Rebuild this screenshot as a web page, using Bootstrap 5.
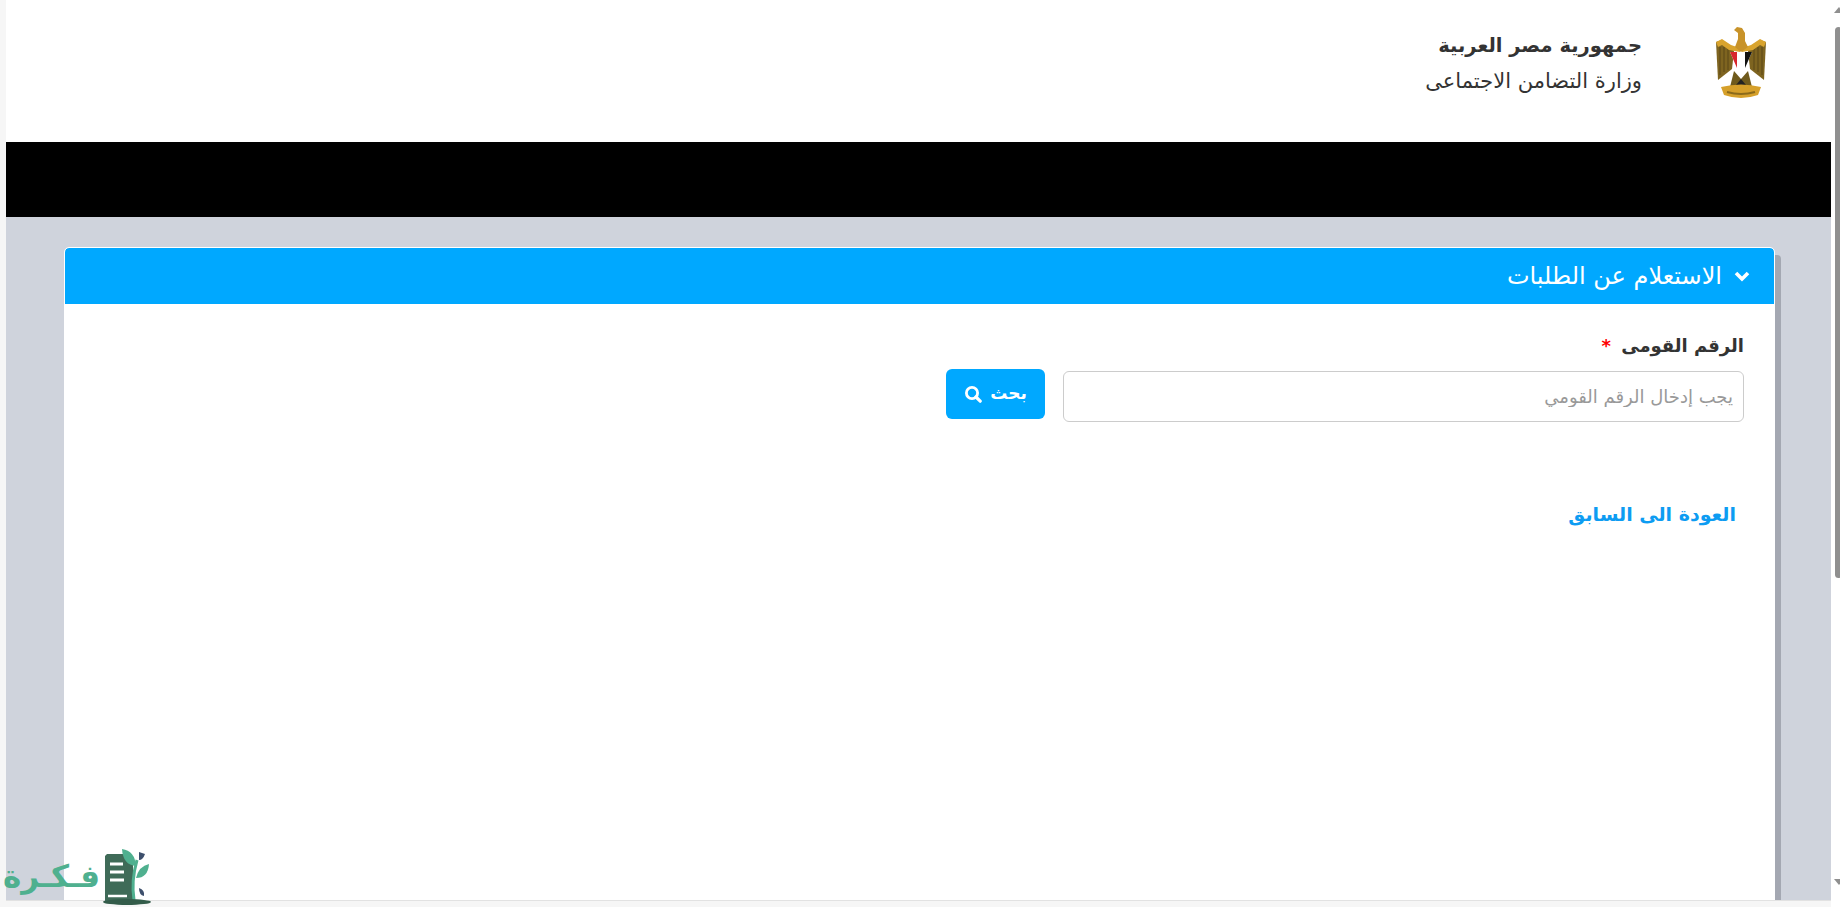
<!DOCTYPE html>
<html lang="ar" dir="rtl">
<head>
    <meta charset="utf-8">
    <meta name="viewport" content="width=device-width, initial-scale=1">
    <title>الاستعلام عن الطلبات</title>
    <link href="https://cdn.jsdelivr.net/npm/bootstrap@5.3.1/dist/css/bootstrap.min.css" rel="stylesheet">
    <style>
        html, body {
            height: 100%;
            overflow: hidden;
        }
        body {
            background: #f6f6f6;
            font-family: "DejaVu Sans", "Noto Sans", sans-serif;
            color: #333;
            position: relative;
        }
        .page-frame {
            height: 901px;
            margin-left: 6px;
            margin-right: 9px;
            background: #cfd3dc;
            border-bottom: 1px solid #e2e2e2;
            overflow: hidden;
        }
        .top-head {
            height: 142px;
            background: #fff;
            padding-top: 27px;
            padding-right: 65px;
        }
        .emblem {
            width: 50px;
            height: 72px;
            filter: blur(0.4px);
        }
        .head-text {
            margin-right: 74px;
            padding-top: 2px;
        }
        .head-title {
            font-size: 19.5px;
            font-weight: 700;
            line-height: 34px;
            color: #333;
        }
        .head-sub {
            font-size: 21px;
            line-height: 34px;
            color: #333;
            margin-top: 1px;
        }
        .black-bar {
            height: 75px;
            background: #000;
        }
        .content-wrap {
            padding: 31px 57px 0 59px;
        }
        .query-panel {
            background: #fff;
            border-radius: 4px 4px 0 0;
            box-shadow: 7px 7px 0 #a4a8b2;
            height: 700px;
            outline: 1px solid #fff;
        }
        .query-head {
            background: #00a8ff;
            color: #fff;
            height: 56px;
            font-size: 24px;
            padding: 0 24px 0 0;
            border-radius: 4px 4px 0 0;
            gap: 12px;
        }
        .query-body {
            padding: 30px 30px 0 0;
        }
        .field-label {
            font-size: 18px;
            font-weight: 700;
            line-height: 24px;
            margin-bottom: 11px;
            color: #333;
        }
        .field-label span {
            color: #f00;
            margin-right: 4px;
        }
        .id-input {
            width: 681px;
            height: 51px;
            border: 1px solid #ccc;
            border-radius: 6px;
            font-family: inherit;
            font-size: 18px;
            padding: 0 10px;
            margin-top: 2px;
        }
        .id-input::placeholder {
            color: #999;
        }
        .search-btn {
            width: 99px;
            height: 50px;
            margin-right: 18px;
            background: #00a8ff;
            border: 0;
            border-radius: 6px;
            color: #fff;
            font-size: 17px;
            font-weight: 700;
        }
        .back-link {
            display: inline-block;
            margin-top: 77px;
            margin-right: 8px;
            color: #0d9cf2;
            font-size: 19px;
            font-weight: 700;
            line-height: 30px;
            text-decoration: none;
        }
        /* scrollbar of the browser window */
        .win-scroll {
            position: absolute;
            top: 0;
            right: 0;
            width: 9px;
            height: 907px;
            background: #fff;
        }
        .win-scroll i {
            position: absolute;
            top: 27px;
            left: 4px;
            width: 7px;
            height: 551px;
            background: #8f8f8f;
            border-radius: 4px;
        }
        .win-scroll b {
            position: absolute;
            left: 3px;
            width: 0;
            height: 0;
            border-left: 5px solid transparent;
            border-right: 5px solid transparent;
        }
        .arrow-up {
            top: 7px;
            border-bottom: 6px solid #8f8f8f;
        }
        .arrow-down {
            top: 879px;
            border-top: 6px solid #8f8f8f;
        }
        .watermark {
            position: absolute;
            left: 0;
            top: 845px;
            width: 152px;
            height: 62px;
        }
        .watermark-text {
            position: absolute;
            right: 52px;
            top: 6px;
            font-size: 31px;
            font-weight: 700;
            line-height: 50px;
            color: #4fb08f;
            white-space: nowrap;
        }
        .watermark svg {
            position: absolute;
            left: 101px;
            top: 1px;
        }
    </style>
</head>
<body>

    <div class="page-frame">
        <header class="top-head d-flex align-items-start">
            <svg class="emblem" viewBox="0 0 50 72" aria-hidden="true">
                <path d="M0 15 L6 13 L15 20 L18 24 L16 42 L2 53 Z" fill="#7e6420"/>
                <path d="M50 15 L44 13 L35 20 L32 24 L34 42 L48 53 Z" fill="#7e6420"/>
                <path d="M4 20 L4 48 M8 20 L8 45 M12 22 L12 43 M46 20 L46 48 M42 20 L42 45 M38 22 L38 43" stroke="#5b4716" stroke-width="1"/>
                <path d="M0 15 L6 12 L15 18 L24 21 L24 25 L13 23 L6 18 L2 20 Z" fill="#d9a42e"/>
                <path d="M50 15 L44 12 L35 18 L26 21 L26 25 L37 23 L44 18 L48 20 Z" fill="#d9a42e"/>
                <path d="M18 3 L21 0 L26 1 L29 6 L29 14 L32 20 L25 25 L19 20 L22 12 L22 6 Z" fill="#c8932a"/>
                <path d="M14 25 H36 L25 50 Z" fill="#fff"/>
                <path d="M14 25 H21 V41 Z" fill="#d8262c"/>
                <path d="M29 25 H36 L29 41 Z" fill="#111"/>
                <path d="M18 44 L25 52 L32 44 L36 60 L14 60 Z" fill="#6f5a1c"/>
                <path d="M20 58 L25 52 L30 58 L27 61 H23 Z" fill="#222"/>
                <path d="M5 60 Q25 55 45 60 L42 68 Q25 74 8 68 Z" fill="#d6a02a"/>
                <path d="M11 65 Q25 69 39 65" fill="none" stroke="#8b6a1a" stroke-width="2"/>
            </svg>
            <div class="head-text">
                <div class="head-title">جمهورية مصر العربية</div>
                <div class="head-sub">وزارة التضامن الاجتماعى</div>
            </div>
        </header>
        <div class="black-bar"></div>

        <main class="content-wrap">
            <section class="query-panel">
                <div class="query-head d-flex align-items-center">
                    <svg width="16" height="12" viewBox="0 0 16 12" aria-hidden="true">
                        <path d="M2 3 L8 9 L14 3" fill="none" stroke="#fff" stroke-width="3.6"/>
                    </svg>
                    <span>الاستعلام عن الطلبات</span>
                </div>
                <div class="query-body">
                    <div class="field-label">الرقم القومى <span>*</span></div>
                    <div class="d-flex align-items-start">
                        <input class="id-input form-control" type="text" placeholder="يجب إدخال الرقم القومي">
                        <button class="search-btn btn d-flex align-items-center justify-content-center gap-2" type="button">
                            <span>بحث</span>
                            <svg width="18" height="18" viewBox="0 0 18 18" aria-hidden="true">
                                <circle cx="8" cy="8" r="5.6" fill="none" stroke="#fff" stroke-width="2.8"/>
                                <path d="M12 12 L16.2 16.2" stroke="#fff" stroke-width="3.2" stroke-linecap="round"/>
                            </svg>
                        </button>
                    </div>
                    <a class="back-link" href="#">العودة الى السابق</a>
                </div>
            </section>
        </main>
    </div>

    <div class="win-scroll"><b class="arrow-up"></b><i></i><b class="arrow-down"></b></div>

    <div class="watermark">
        <span class="watermark-text">فـكـرة</span>
        <svg width="50" height="60" viewBox="0 0 50 60" aria-hidden="true">
            <path d="M6 8 H24 L32 18 V55 H4 V10 Z" fill="#3f6b58"/>
            <path d="M9 18 H22 M9 26 H23 M9 34 H23" stroke="#fff" stroke-width="3"/>
            <path d="M7 50 H26" stroke="#fff" stroke-width="2.5"/>
            <path d="M33 54 Q30 35 36 14" fill="none" stroke="#4fb08f" stroke-width="3"/>
            <path d="M21 3 Q34 5 35 20 Q22 19 21 3 Z" fill="#4fb08f"/>
            <path d="M35 32 Q38 20 48 18 Q47 32 35 32 Z" fill="#4fb08f"/>
            <path d="M38 6 L44 8 Q42 14 38 14 Z" fill="#3d4f6c"/>
            <path d="M38 42 Q44 44 43 50 Q38 49 38 42 Z" fill="#3d4f6c"/>
            <ellipse cx="26" cy="56" rx="24" ry="3" fill="#335c4a"/>
        </svg>
    </div>

    <script src="https://cdn.jsdelivr.net/npm/bootstrap@5.3.1/dist/js/bootstrap.bundle.min.js"></script>
</body>
</html>
